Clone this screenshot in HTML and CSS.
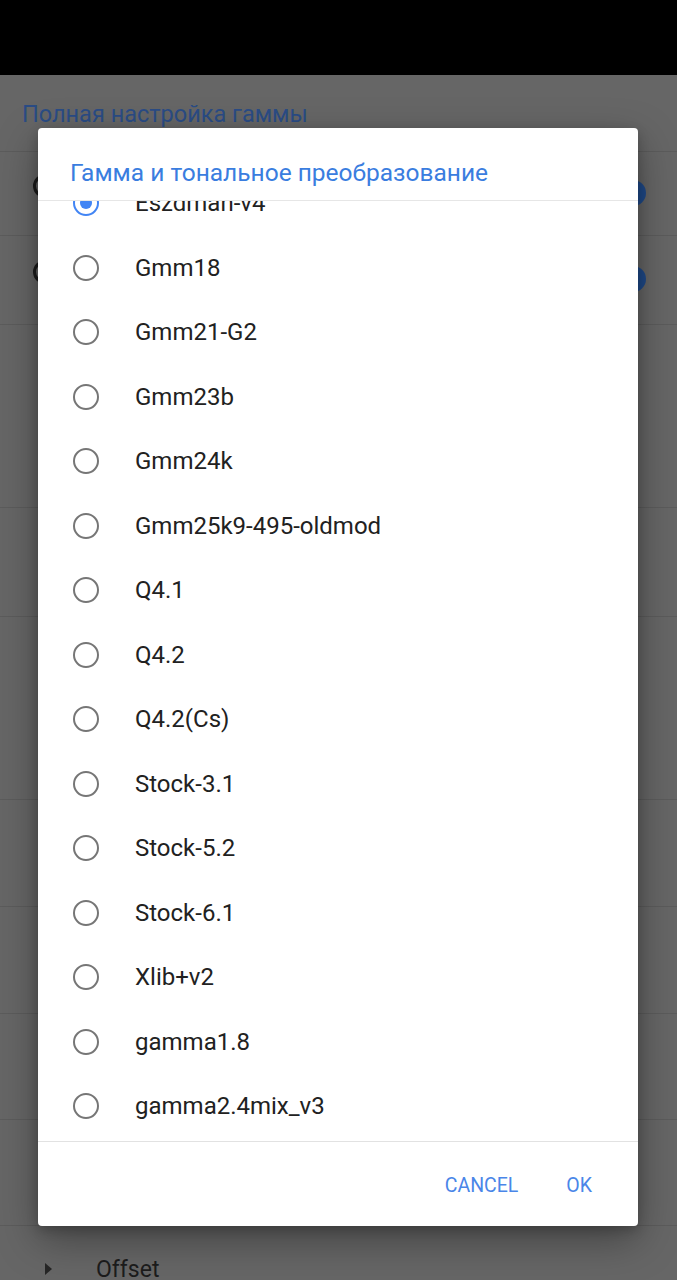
FILE: index.html
```html
<!DOCTYPE html>
<html lang="ru">
<head>
<meta charset="utf-8">
<link rel="stylesheet" href="styles.css">
</head>
<body>
<div class="screen">
  <div class="statusbar"></div>
  <div class="settings">
    <div class="header">Полная настройка гаммы</div>
    <div class="row r1"><span class="ring"></span><span class="toggle"></span></div>
    <div class="row r2"><span class="ring"></span><span class="toggle"></span></div>
    <div class="row r3"></div>
    <div class="row r4"></div>
    <div class="row r5"></div>
    <div class="row r6"></div>
    <div class="row r7"></div>
    <div class="row r8"></div>
    <div class="row r9"></div>
    <div class="row offset"><span class="tri"></span><span class="offset-label">Offset</span></div>
  </div>

  <div class="dialog">
    <div class="dialog-title">Гамма и тональное преобразование</div>
    <div class="list-wrap">
      <ul class="list">
        <li class="item selected"><span class="radio"></span><span class="label">Eszdman-v4</span></li>
        <li class="item"><span class="radio"></span><span class="label">Gmm18</span></li>
        <li class="item"><span class="radio"></span><span class="label">Gmm21-G2</span></li>
        <li class="item"><span class="radio"></span><span class="label">Gmm23b</span></li>
        <li class="item"><span class="radio"></span><span class="label">Gmm24k</span></li>
        <li class="item"><span class="radio"></span><span class="label">Gmm25k9-495-oldmod</span></li>
        <li class="item"><span class="radio"></span><span class="label">Q4.1</span></li>
        <li class="item"><span class="radio"></span><span class="label">Q4.2</span></li>
        <li class="item"><span class="radio"></span><span class="label">Q4.2(Cs)</span></li>
        <li class="item"><span class="radio"></span><span class="label">Stock-3.1</span></li>
        <li class="item"><span class="radio"></span><span class="label">Stock-5.2</span></li>
        <li class="item"><span class="radio"></span><span class="label">Stock-6.1</span></li>
        <li class="item"><span class="radio"></span><span class="label">Xlib+v2</span></li>
        <li class="item"><span class="radio"></span><span class="label">gamma1.8</span></li>
        <li class="item"><span class="radio"></span><span class="label">gamma2.4mix_v3</span></li>
      </ul>
    </div>
    <div class="actions">
      <span class="btn">CANCEL</span>
      <span class="btn">OK</span>
    </div>
  </div>
</div>
</body>
</html>
```

FILE: styles.css
```css
* { box-sizing: border-box; }
html, body {
  margin: 0;
  padding: 0;
  width: 677px;
  height: 1280px;
  overflow: hidden;
  background: #666666;
  font-family: Roboto, "Noto Sans", sans-serif;
}
.screen {
  position: relative;
  width: 677px;
  height: 1280px;
  overflow: hidden;
}
.statusbar {
  height: 75px;
  background: #000;
}
.settings {
  background: #666666;
}
.header {
  height: 77px;
  padding-left: 22px;
  padding-top: 23px;
  font-size: 23.5px;
  line-height: 32px;
  color: #2a4c85;
  border-bottom: 1px solid #5c5c5c;
}
.row {
  position: relative;
  border-bottom: 1px solid #5c5c5c;
}
.r1 { height: 84px; }
.r2 { height: 89px; }
.r3 { height: 183px; }
.r4 { height: 109px; }
.r5 { height: 183px; }
.r6 { height: 107px; }
.r7 { height: 107px; }
.r8 { height: 106px; }
.r9 { height: 106px; }
.ring {
  position: absolute;
  left: 33px;
  top: 22px;
  width: 24px;
  height: 24px;
  border: 3px solid #1c1c1c;
  border-radius: 50%;
}
.r2 .ring { top: 24px; }
.toggle {
  position: absolute;
  left: 620px;
  top: 28px;
  width: 26px;
  height: 26px;
  border-radius: 50%;
  background: #1f4a8a;
}
.r2 .toggle { top: 30px; }
.offset {
  height: 60px;
  border-bottom: none;
  display: flex;
  align-items: center;
  padding-top: 26px;
}
.tri {
  margin-left: 45px;
  width: 0;
  height: 0;
  border-top: 6px solid transparent;
  border-bottom: 6px solid transparent;
  border-left: 7px solid #262626;
}
.offset-label {
  margin-left: 44px;
  font-size: 23px;
  color: #1c1c1c;
}

.dialog {
  position: absolute;
  left: 38px;
  top: 128px;
  width: 600px;
  height: 1098px;
  background: #fff;
  border-radius: 4px;
  box-shadow: 0 14px 40px rgba(0, 0, 0, 0.35), 0 4px 12px rgba(0, 0, 0, 0.2);
  display: flex;
  flex-direction: column;
}
.dialog-title {
  flex: none;
  height: 73px;
  padding: 29px 0 0 32px;
  font-size: 24.5px;
  line-height: 32px;
  color: #3a7ddf;
  border-bottom: 1px solid #e6e6e6;
}
.list-wrap {
  flex: none;
  height: 941px;
  overflow: hidden;
  border-bottom: 1px solid #e2e2e2;
}
.list {
  list-style: none;
  margin: -30px 0 0 0;
  padding: 0;
}
.item {
  height: 64.5px;
  display: flex;
  align-items: center;
  padding-left: 35px;
}
.radio {
  flex: none;
  width: 26px;
  height: 26px;
  border: 2.5px solid #767676;
  border-radius: 50%;
  display: flex;
  align-items: center;
  justify-content: center;
}
.selected .radio {
  border-color: #4285f4;
}
.selected .radio::after {
  content: "";
  width: 12px;
  height: 12px;
  border-radius: 50%;
  background: #4285f4;
}
.label {
  margin-left: 36px;
  font-size: 24px;
  color: #212121;
}
.actions {
  flex: 1;
  display: flex;
  justify-content: flex-end;
  align-items: center;
  padding-right: 46px;
  padding-top: 3px;
  gap: 48px;
}
.btn {
  font-size: 19.5px;
  color: #4a86e8;
}
```
